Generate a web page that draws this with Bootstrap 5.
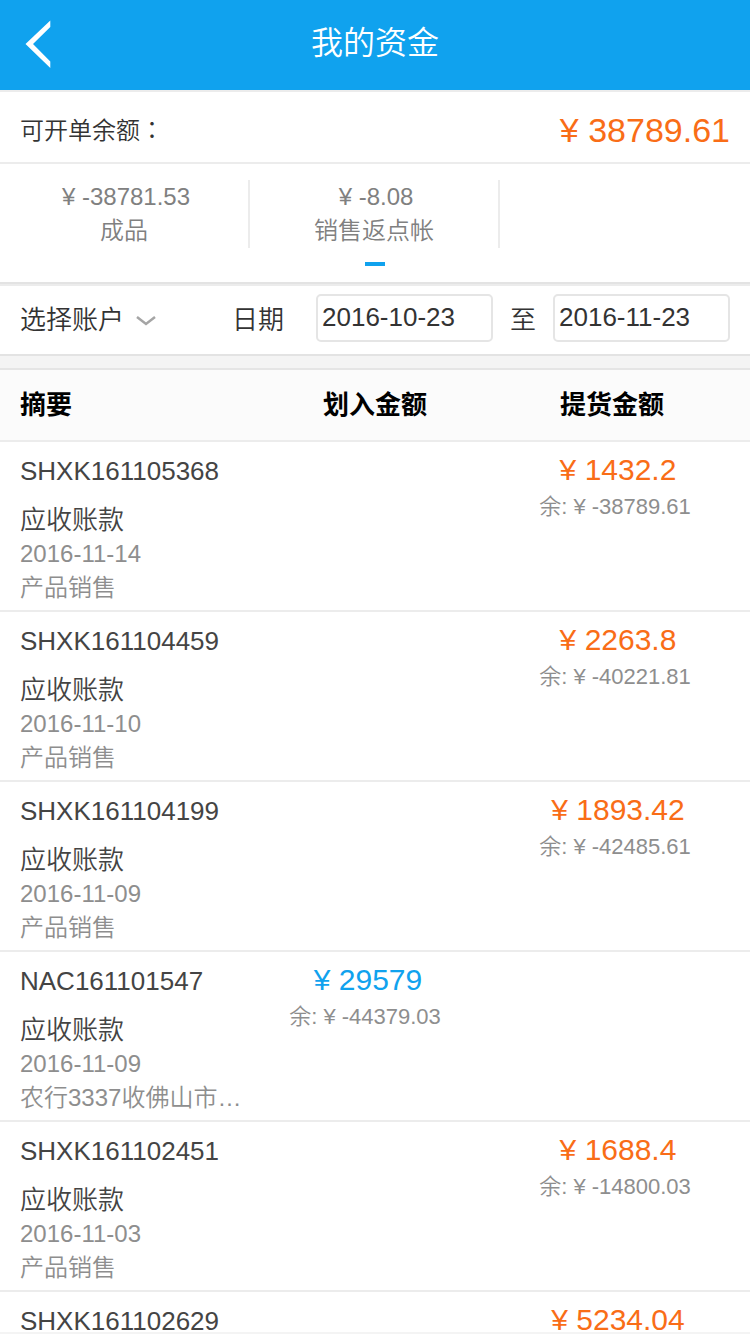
<!DOCTYPE html>
<html lang="zh-CN">
<head>
<meta charset="utf-8">
<meta name="viewport" content="width=device-width, initial-scale=1">
<title>我的资金</title>
<link href="https://cdn.jsdelivr.net/npm/bootstrap@5.3.0/dist/css/bootstrap.min.css" rel="stylesheet">
<style>
  body { font-family: "Liberation Sans", "Noto Sans CJK SC", sans-serif; font-weight: 350; font-size: 26px; line-height: 34px; color: #333; background: #fff; }
  .title-bar { background: #10a2ee; height: 90px; color: #fff; }
  .title-bar h1 { font-size: 32px; line-height: 86px; font-weight: 350; }
  .side { width: 60px; padding-left: 20px; }
  .rule-top { border-top: 2px solid #ececec; }
  .balance-row { height: 72px; padding: 6px 20px 0; font-size: 24px; }
  .colon { font-family: "Noto Sans CJK TC", sans-serif; }
  .total { font-size: 34px; color: #f96d17; }
  .accounts { padding: 16px 0 14px; font-size: 24px; color: #808080; }
  .account { border-right: 2px solid #ececec; height: 68px; }
  .account:last-child { border-right-color: transparent; }
  .sum { padding-left: 4px; }
  .pager { width: 20px; height: 4px; background: #10a2ee; margin: 0 auto 16px; }
  .filters { border-top: 2px solid #e3e3e3; border-bottom: 2px solid #e3e3e3; }
  .filters-inner { height: 70px; padding: 0 20px; }
  .pick { appearance: none; border: 0; background: none; padding: 0; color: #333; font-weight: 350; width: 104px; height: 40px; line-height: 40px; }
  .pick-wrap { width: 212px; gap: 12px; }
  .date-label { width: 84px; }
  .to-label { width: 60px; }
  .date-box { flex: 1 1 0; min-width: 0; height: 48px; margin-bottom: 4px; border: 2px solid #e5e5e5; border-radius: 5px; padding: 0 4px 2px; color: #333; font-size: 26px; font-weight: 350; }
  .spacer { height: 14px; background: #f4f4f4; border-bottom: 2px solid #e5e5e5; }
  .ledger { table-layout: fixed; border-collapse: separate; border-spacing: 0; }
  .ledger thead th { height: 72px; background: #fbfbfb; color: #000; font-weight: 700; padding: 0; vertical-align: middle; border-bottom: 2px solid #ececec; }
  .ledger thead th:first-child { padding-left: 20px; }
  .ledger thead th:last-child { padding-right: 26px; }
  .ledger tbody td { height: 170px; vertical-align: top; padding: 10px 20px 0 0; border-bottom: 2px solid #ececec; text-align: center; }
  .ledger tbody td:first-child { padding: 12px 0 4px 20px; text-align: left; color: #444; }
  .entry { margin-bottom: 15px; }
  .minor { font-size: 24px; color: #8e8e8e; }
  .amount { font-size: 30px; line-height: 36px; padding-left: 6px; }
  .amount-out { color: #f96d17; }
  .amount-in { color: #10a2ee; }
  .rest { font-size: 22px; line-height: 38px; color: #8e8e8e; }
  .scroll { min-height: 0; border-bottom: 2px solid #f4f4f4; }
</style>
</head>
<body>
<div class="vh-100 d-flex flex-column overflow-hidden">
  <header class="title-bar d-flex flex-shrink-0">
    <div class="side d-flex align-items-center">
      <a href="#" aria-label="返回" class="d-flex"><svg width="36" height="50" viewBox="0 0 36 50" fill="#fff"><path d="M30.300 0.500V7L13 24L30.300 41.500V48L5.500 24Z"/></svg></a>
    </div>
    <h1 class="flex-grow-1 text-center m-0">我的资金</h1>
    <div class="side"></div>
  </header>

  <main class="scroll flex-grow-1 overflow-hidden">
    <section class="balance-row rule-top d-flex align-items-center justify-content-between">
      <span>可开单余额<span class="colon" lang="zh-TW">：</span></span><span class="total">¥ 38789.61</span>
    </section>

    <section class="rule-top">
      <div class="accounts row g-0 text-center">
        <div class="account col-4"><div class="sum">¥ -38781.53</div><div>成品</div></div>
        <div class="account col-4"><div class="sum">¥ -8.08</div><div>销售返点帐</div></div>
        <div class="account col-4"></div>
      </div>
      <div class="pager"></div>
    </section>

    <form class="filters">
      <div class="filters-inner rule-top d-flex align-items-center">
        <div class="pick-wrap d-flex align-items-center">
          <select class="pick" aria-label="选择账户"><option>选择账户</option></select>
          <svg width="20" height="12" viewBox="0 0 20 12" fill="none" stroke="#a5a5a5" stroke-width="2.500"><path d="M1 3L10 10L19 3"/></svg>
        </div>
        <label class="date-label" for="from">日期</label>
        <input class="date-box" id="from" type="text" value="2016-10-23">
        <label class="to-label text-center" for="to">至</label>
        <input class="date-box" id="to" type="text" value="2016-11-23">
      </div>
    </form>
    <div class="spacer"></div>

    <table class="ledger w-100">
      <thead>
        <tr><th>摘要</th><th class="text-center">划入金额</th><th class="text-center">提货金额</th></tr>
      </thead>
      <tbody>
        <tr>
          <td><div class="entry">SHXK161105368</div><div>应收账款</div><div class="minor">2016-11-14</div><div class="minor text-truncate">产品销售</div></td>
          <td></td>
          <td><div class="amount amount-out">¥ 1432.2</div><div class="rest">余: ¥ -38789.61</div></td>
        </tr>
        <tr>
          <td><div class="entry">SHXK161104459</div><div>应收账款</div><div class="minor">2016-11-10</div><div class="minor text-truncate">产品销售</div></td>
          <td></td>
          <td><div class="amount amount-out">¥ 2263.8</div><div class="rest">余: ¥ -40221.81</div></td>
        </tr>
        <tr>
          <td><div class="entry">SHXK161104199</div><div>应收账款</div><div class="minor">2016-11-09</div><div class="minor text-truncate">产品销售</div></td>
          <td></td>
          <td><div class="amount amount-out">¥ 1893.42</div><div class="rest">余: ¥ -42485.61</div></td>
        </tr>
        <tr>
          <td><div class="entry">NAC161101547</div><div>应收账款</div><div class="minor">2016-11-09</div><div class="minor text-truncate">农行3337收佛山市…</div></td>
          <td><div class="amount amount-in">¥ 29579</div><div class="rest">余: ¥ -44379.03</div></td>
          <td></td>
        </tr>
        <tr>
          <td><div class="entry">SHXK161102451</div><div>应收账款</div><div class="minor">2016-11-03</div><div class="minor text-truncate">产品销售</div></td>
          <td></td>
          <td><div class="amount amount-out">¥ 1688.4</div><div class="rest">余: ¥ -14800.03</div></td>
        </tr>
        <tr>
          <td><div class="entry">SHXK161102629</div></td>
          <td></td>
          <td><div class="amount amount-out">¥ 5234.04</div></td>
        </tr>
      </tbody>
    </table>
  </main>
</div>
<script src="https://cdn.jsdelivr.net/npm/bootstrap@5.3.0/dist/js/bootstrap.bundle.min.js"></script>
</body>
</html>
